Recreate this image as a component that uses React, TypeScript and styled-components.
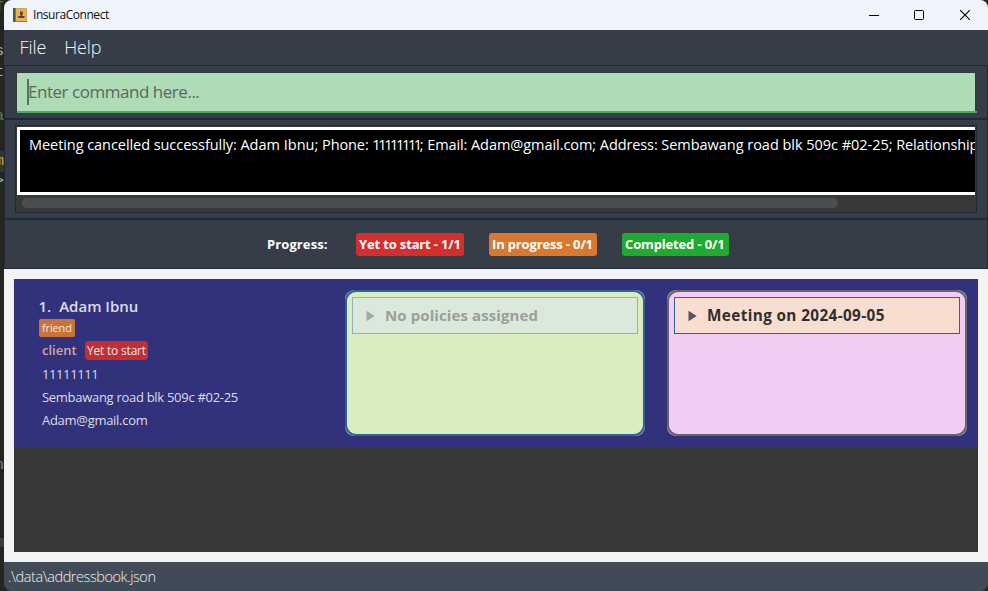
import React from 'react';
import styled, { createGlobalStyle } from 'styled-components';

const GlobalStyle = createGlobalStyle`
  *, *::before, *::after { box-sizing: border-box; }
  html, body { margin: 0; padding: 0; background: #232323; overflow: hidden; }
  body { font-family: "Open Sans", "Noto Sans", sans-serif; }
`;

const Desktop = styled.div`
  display: flex;
  width: 988px;
  height: 591px;
  background: #242423;
  overflow: hidden;
`;

const EditorStrip = styled.div`
  flex: 0 0 4px;
  overflow: hidden;
  display: flex;
  flex-direction: column;
  font: 15px/20px "Liberation Mono", monospace;
`;

const EditorLine = styled.div<{ $h: number; $color?: string; $bg?: string }>`
  flex: 0 0 ${p => p.$h}px;
  height: ${p => p.$h}px;
  display: flex;
  justify-content: flex-end;
  align-items: flex-end;
  color: ${p => p.$color ?? '#a9b7c6'};
  background: ${p => p.$bg ?? 'transparent'};
`;

const Window = styled.div`
  flex: 1;
  min-width: 0;
  display: flex;
  flex-direction: column;
  border-radius: 8px;
  overflow: hidden;
  background: #363d49;
`;

const TitleBar = styled.header`
  flex: 0 0 30px;
  display: flex;
  align-items: center;
  padding-left: 9px;
  background: #eff4fa;
`;

const Title = styled.span`
  flex: 1;
  margin-left: 6px;
  font-size: 12px;
  line-height: 28px;
  letter-spacing: -0.45px;
  color: #111;
`;

const WindowButton = styled.button`
  width: 46px;
  height: 30px;
  padding: 0 0 1px;
  border: 0;
  background: none;
  display: flex;
  align-items: center;
  justify-content: center;
`;

const MinimizeButton = styled(WindowButton)`
  width: 45px;
  padding-left: 1px;
`;

const MenuBar = styled.nav`
  flex: 0 0 35px;
  display: flex;
  gap: 18px;
  padding-left: 15.5px;
`;

const MenuItem = styled.span`
  font-size: 18px;
  font-weight: 300;
  line-height: 35px;
  letter-spacing: -0.1px;
  color: #f4f5f7;
`;

const Pane = styled.section<{ $h: number }>`
  flex: 0 0 ${p => p.$h}px;
  border: 1px solid #222936;
  display: flex;
`;

const CommandPane = styled(Pane)`
  padding: 6px 10px 0 11px;
`;

const CommandFrame = styled.div`
  flex: 1;
  height: 41px;
  padding: 1px 0 0 1px;
  background: #38393a;
  display: flex;
  flex-direction: column;
`;

const CommandField = styled.div`
  height: 38px;
  margin-right: 2px;
  padding-left: 10px;
  background: #addcb6;
  display: flex;
  align-items: center;
`;

const CommandUnderline = styled.div`
  height: 2px;
  background: #4ba961;
`;

const Caret = styled.span`
  width: 2px;
  height: 26px;
  background: #57735c;
`;

const Placeholder = styled.span`
  margin-left: -1px;
  font-size: 17px;
  line-height: 36px;
  letter-spacing: -0.47px;
  color: #5d665f;
`;

const ResultPane = styled(Pane)`
  padding: 5px 10px 5px 10px;
`;

const ResultFrame = styled.div`
  flex: 1;
  min-width: 0;
  border: 1px solid #222936;
  padding: 1px;
  background: #383838;
  display: flex;
  flex-direction: column;
`;

const ResultText = styled.div`
  flex: 0 0 68px;
  overflow: hidden;
  border: solid #fff;
  border-width: 3px 0 3px 3px;
  padding: 5px 0 0 9px;
  background: #000;
  color: #fff;
  font-size: 14.5px;
  line-height: 20px;
  white-space: nowrap;
`;

const Segment = styled.span<{ $ls: number }>`
  letter-spacing: ${p => p.$ls}px;
`;

const ScrollThumb = styled.div`
  width: 816px;
  height: 10px;
  margin: 3px 0 0 5px;
  border-radius: 5px;
  background: #4b4e50;
`;

const ProgressPane = styled(Pane)`
  padding: 13px 0 0 262px;
  color: #fff;
  font-size: 13px;
  font-weight: 700;
  line-height: 22px;
`;

const ProgressLabel = styled.span`
  width: 89px;
  letter-spacing: 0.1px;
`;

const ProgressBadge = styled.span<{ $w: number; $color: string }>`
  width: ${p => p.$w}px;
  height: 23px;
  margin-right: 25px;
  padding-left: 3px;
  border-radius: 3px;
  background: ${p => p.$color};
  letter-spacing: -0.15px;
  white-space: nowrap;
`;

const ListPane = styled.main`
  flex: 0 0 293px;
  padding: 10px;
  background: #f3f3f3;
  display: flex;
`;

const ClientList = styled.div`
  flex: 1;
  background: #383838;
`;

const ClientCard = styled.article`
  width: 964px;
  height: 168px;
  padding: 11px 11px 0 25px;
  background: #31327b;
  display: grid;
  grid-template-columns: 284px 300px 300px;
  column-gap: 22px;
`;

const Details = styled.div`
  display: flex;
  flex-direction: column;
  align-items: flex-start;
  padding-top: 5px;
  color: #dcdce9;
  font-size: 13px;
`;

const Name = styled.div`
  display: flex;
  gap: 8px;
  height: 24px;
  font-size: 15px;
  font-weight: 600;
  line-height: 22px;
`;

const Index = styled.span`
  margin-left: -0.5px;
`;

const FriendTag = styled.span`
  height: 18px;
  width: 36px;
  padding-left: 3px;
  border-radius: 2px;
  background: #c87338;
  color: #f2eaea;
  font-size: 11px;
  line-height: 17px;
  letter-spacing: -0.15px;
`;

const RelationRow = styled.div`
  display: flex;
  gap: 8px;
  height: 26px;
  padding: 4px 0 0 3px;
`;

const Relation = styled.span`
  width: 35px;
  color: #d3a6a1;
  font-weight: 600;
  line-height: 18px;
`;

const StatusTag = styled.span`
  width: 63px;
  height: 19px;
  padding-left: 2px;
  border-radius: 4px;
  background: #c12e35;
  color: #f2e8ec;
  font-size: 12px;
  line-height: 20px;
  letter-spacing: -0.2px;
`;

const Field = styled.span<{ $ls: number }>`
  height: 23px;
  padding-left: 3px;
  line-height: 22px;
  letter-spacing: ${p => p.$ls}px;
  white-space: nowrap;
`;

const PanelEdge = styled.div`
  height: 146px;
  border-radius: 9px;
  background: #a9aebd;
`;

const Panel = styled.div<{ $bg: string; $border: string }>`
  height: 146px;
  padding: 5px;
  border: 2px solid ${p => p.$border};
  border-radius: 11px;
  background: ${p => p.$bg};
`;

const PanelHeader = styled.div<{ $bg: string; $border: string; $color: string; $size: number; $ls: number }>`
  height: 37px;
  border: 1px solid ${p => p.$border};
  padding-left: 13px;
  display: flex;
  align-items: center;
  gap: 10px;
  background: ${p => p.$bg};
  color: ${p => p.$color};
  font-size: ${p => p.$size}px;
  font-weight: 700;
  letter-spacing: ${p => p.$ls}px;
`;

const PanelTitle = styled.span`
  line-height: 34px;
  padding-bottom: 2px;
`;

const StatusBar = styled.footer`
  flex: 1;
  padding-left: 4px;
  background: #414b57;
  color: #eceff2;
  font-size: 14.5px;
  font-weight: 300;
  line-height: 29px;
  letter-spacing: -0.43px;
`;

const AppIcon = () => (
  <svg width="14" height="14" viewBox="0 0 14 14">
    <rect width="14" height="14" rx="1" fill="#d3a04b" />
    <rect x="3" y="1" width="10" height="12" fill="#e3b45f" />
    <path d="M0 1a1 1 0 0 1 1-1h1.5v14H1a1 1 0 0 1-1-1z" fill="#555046" />
    <path d="M2.5 13h11.5v1H2.5z" fill="#a9782f" />
    <path d="M7 3.4h2.8v2.8l-.6 1v.9h2.3V10H5.2V8.1h2.4v-.9L7 6.2z" fill="#5c4522" />
  </svg>
);

const Arrow = ({ color }: { color: string }) => (
  <svg width="9" height="12" viewBox="0 0 9 12">
    <path d="M.5.8L8.7 6 .5 11.2z" fill={color} />
  </svg>
);

const message: [string, number][] = [
  ['Meeting cancelled successfully: ', -0.06],
  ['Adam Ibnu; ', 0],
  ['Phone: ', -0.1],
  ['11111111', -2.35],
  ['; Email: ', -0.1],
  ['Adam@gmail.com; ', -0.05],
  ['Address: ', -0.1],
  ['Sembawang road blk 509c #02-25; ', -0.03],
  ['Relationship: client', -0.13],
];

export default function App() {
  return (
    <Desktop>
      <GlobalStyle />
      <EditorStrip>
        <EditorLine $h={18} $color="#4e7a48">T</EditorLine>
        <EditorLine $h={44}>s</EditorLine>
        <EditorLine $h={21}>t</EditorLine>
        <EditorLine $h={44} $color="#56854e">a</EditorLine>
        <EditorLine $h={24} />
        <EditorLine $h={21} $color="#c9a43f" $bg="#2f3a2f">m</EditorLine>
        <EditorLine $h={20}>&gt;</EditorLine>
        <EditorLine $h={284} $color="#5a8fc0">n</EditorLine>
        <EditorLine $h={62} />
        <EditorLine $h={9} $bg="#3c3c3b" />
      </EditorStrip>
      <Window>
        <TitleBar>
          <AppIcon />
          <Title>InsuraConnect</Title>
          <MinimizeButton aria-label="Minimize">
            <svg width="10" height="10"><path d="M0 5.5h10" stroke="#000" /></svg>
          </MinimizeButton>
          <WindowButton aria-label="Maximize">
            <svg width="10" height="10"><rect x=".5" y=".5" width="9" height="9" rx="1" fill="none" stroke="#000" /></svg>
          </WindowButton>
          <WindowButton aria-label="Close">
            <svg width="10" height="10"><path d="M0 0l10 10M10 0L0 10" stroke="#000" strokeWidth="1.1" /></svg>
          </WindowButton>
        </TitleBar>
        <MenuBar>
          <MenuItem>File</MenuItem>
          <MenuItem>Help</MenuItem>
        </MenuBar>
        <CommandPane $h={54}>
          <CommandFrame>
            <CommandField>
              <Caret />
              <Placeholder>Enter command here...</Placeholder>
            </CommandField>
            <CommandUnderline />
          </CommandFrame>
        </CommandPane>
        <ResultPane $h={100}>
          <ResultFrame>
            <ResultText>
              {message.map(([text, ls]) => <Segment key={text} $ls={ls}>{text}</Segment>)}
            </ResultText>
            <ScrollThumb />
          </ResultFrame>
        </ResultPane>
        <ProgressPane $h={50}>
          <ProgressLabel>Progress:</ProgressLabel>
          <ProgressBadge $w={108} $color="#d42f2f">Yet to start - 1/1</ProgressBadge>
          <ProgressBadge $w={108} $color="#d97930">In progress - 0/1</ProgressBadge>
          <ProgressBadge $w={107} $color="#20aa30">Completed - 0/1</ProgressBadge>
        </ProgressPane>
        <ListPane>
          <ClientList>
            <ClientCard>
              <Details>
                <Name><Index>1.</Index><span>Adam Ibnu</span></Name>
                <FriendTag>friend</FriendTag>
                <RelationRow>
                  <Relation>client</Relation>
                  <StatusTag>Yet to start</StatusTag>
                </RelationRow>
                <Field $ls={-0.4}>11111111</Field>
                <Field $ls={-0.29}>Sembawang road blk 509c #02-25</Field>
                <Field $ls={-0.29}>Adam@gmail.com</Field>
              </Details>
              <PanelEdge>
                <Panel $bg="#d9edbe" $border="#2b6495">
                  <PanelHeader $bg="#dae9da" $border="#90b1be" $color="#9c9e9c" $size={15} $ls={0.1}>
                    <Arrow color="#a5a9a6" />
                    <PanelTitle>No policies assigned</PanelTitle>
                  </PanelHeader>
                </Panel>
              </PanelEdge>
              <PanelEdge>
                <Panel $bg="#f1ccf3" $border="#666668">
                  <PanelHeader $bg="#f8ddd1" $border="#31639a" $color="#2f2f30" $size={15.3} $ls={0.38}>
                    <Arrow color="#555456" />
                    <PanelTitle>Meeting on 2024-09-05</PanelTitle>
                  </PanelHeader>
                </Panel>
              </PanelEdge>
            </ClientCard>
          </ClientList>
        </ListPane>
        <StatusBar>.\data\addressbook.json</StatusBar>
      </Window>
    </Desktop>
  );
}
